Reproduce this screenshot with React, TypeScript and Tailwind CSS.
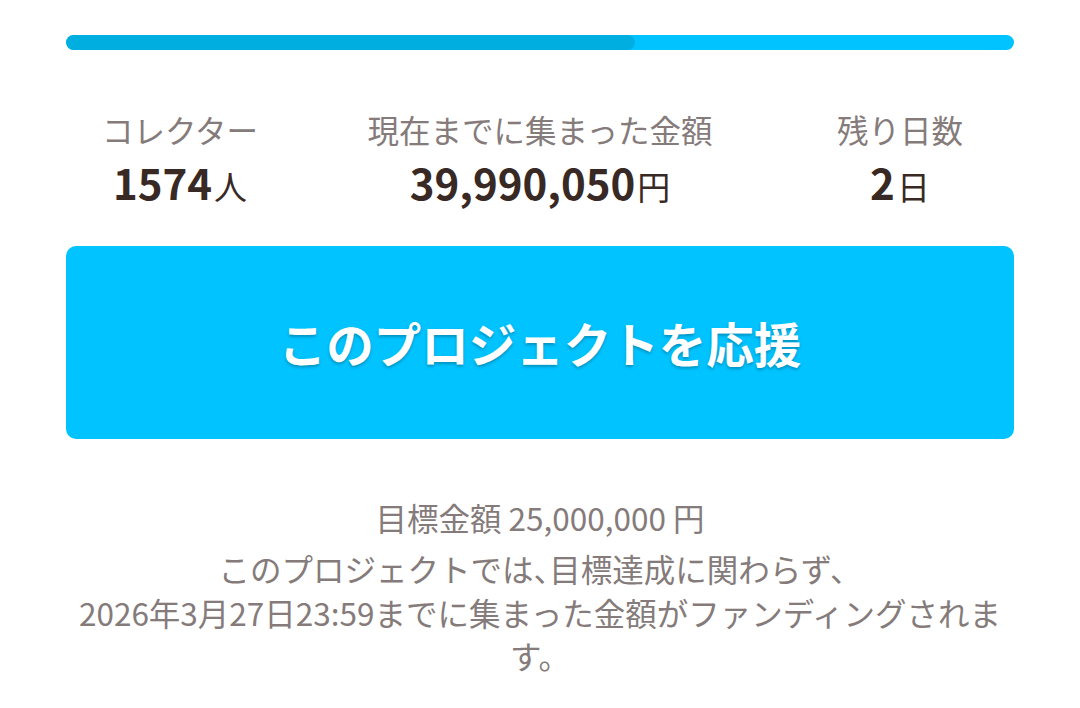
const font = { fontFamily: '"Noto Sans CJK JP", "Noto Sans", sans-serif' };

function Stat({ label, value, unit }: { label: string; value: string; unit: string }) {
  return (
    <div className="flex flex-col items-center">
      <div className="text-[31.5px] leading-[44px] text-[#857b7b]">{label}</div>
      <div className="mt-[5px] leading-[52px] text-[#382925]">
        <span className="text-[42px] font-bold">{value}</span>
        <span className="text-[33px] ml-[2px]">{unit}</span>
      </div>
    </div>
  );
}

export default function App() {
  const percent = 60;
  return (
    <div className="w-[1080px] h-[708px] bg-white px-[66px] pt-[35px] overflow-hidden" style={font}>
      <div className="h-[15px] rounded-full bg-[#00c3ff] overflow-hidden">
        <div className="h-full rounded-full bg-[#00aee0]" style={{ width: `${percent}%` }} />
      </div>

      <div className="-mx-[66px] mt-[57px] grid grid-cols-3">
        <Stat label="コレクター" value="1574" unit="人" />
        <Stat label="現在までに集まった金額" value="39,990,050" unit="円" />
        <Stat label="残り日数" value="2" unit="日" />
      </div>

      <button className="mt-[27px] w-full h-[193px] rounded-[10px] bg-[#00c3ff] flex items-center justify-center">
        <span className="text-white text-[47.5px] font-bold [text-shadow:0_2px_3px_rgba(0,0,0,0.25)]">
          このプロジェクトを応援
        </span>
      </button>

      <div className="mt-[56px] text-center text-[31.5px] leading-[44px] text-[#857b7b]">
        目標金額 25,000,000 円
      </div>
      <p className="mt-[8px] text-center text-[31.5px] leading-[43.5px] text-[#857b7b]">
        このプロジェクトでは<span className="[font-feature-settings:'halt']">、</span>目標達成に関わらず、
        <br />
        2026年3月27日23:59までに集まった金額がファンディングされます。
      </p>
    </div>
  );
}
